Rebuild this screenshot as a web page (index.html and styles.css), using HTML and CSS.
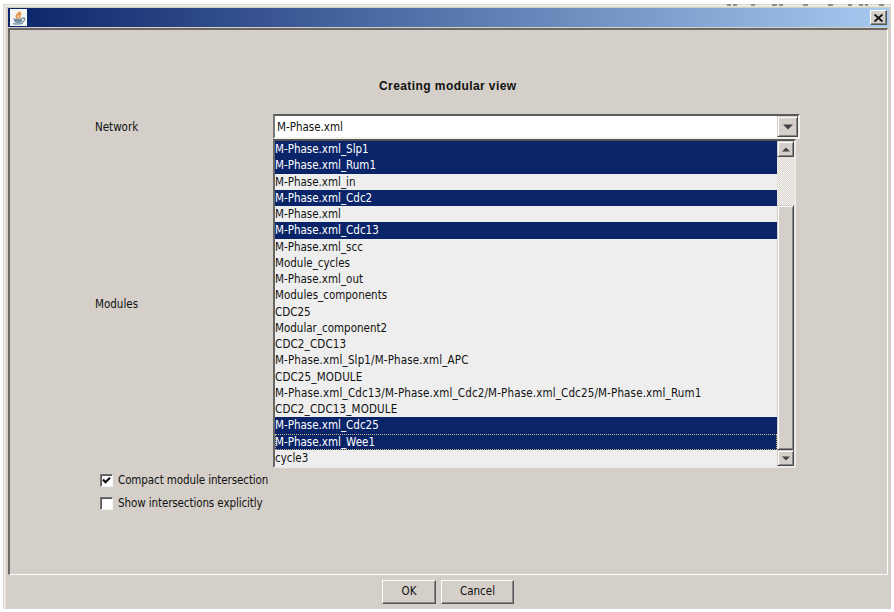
FILE: index.html
```html
<!DOCTYPE html>
<html lang="en">
<head>
<meta charset="utf-8">
<title>Creating modular view</title>
<link rel="stylesheet" href="styles.css">
</head>
<body>
<div class="window">
  <svg class="behind" width="167" height="2" viewBox="0 0 167 2"><path d="M3 1h4M9 1h4M27 1h4M48 1h5M55 1h4M79 1h5M104 1h5M124 1h4M135 1h4M141 1h3M155 1h5" stroke="#757570" stroke-width="1.500"/></svg>
  <header class="titlebar">
    <svg class="java" width="17" height="17" viewBox="0 0 17 17">
      <rect width="17" height="17" fill="#f5f7f5"/>
      <path d="M9.800 2.500C9.500 4.500 6.500 5 6.500 7.500Q6.800 9 8 10M11.300 4.500C8 6 10.500 7.500 9.300 9.500" fill="none" stroke="#e99a55" stroke-width="2"/>
      <path d="M3.500 9Q8 11 12 9V12Q11 14 8 14T4 12z" fill="#718da4"/>
      <path d="M12 9.500Q15 7.500 14.500 10.500T11.500 12.500M3 14.500Q8 15.700 13 14.300" fill="none" stroke="#8198aa" stroke-width="1.500"/>
    </svg>
    <span class="close"><svg width="9" height="8" viewBox="0 0 9 8"><path d="M.5 0.500L8.500 7.500M8.500 .5L.5 7.500" stroke="#111" stroke-width="1.900"/></svg></span>
  </header>
  <main class="panel">
    <h1>Creating modular view</h1>
    <div class="field network">
      <label>Network</label>
      <div class="combo"><span class="value">M-Phase.xml</span><span class="btn drop"><svg width="10" height="6" viewBox="0 0 10 6"><path d="M0 .5H10L5 5.500z" fill="#404040"/></svg></span></div>
    </div>
    <div class="field modules">
      <label>Modules</label>
      <div class="listbox">
        <ul>
          <li class="sel">M-Phase.xml_Slp1</li>
          <li class="sel">M-Phase.xml_Rum1</li>
          <li>M-Phase.xml_in</li>
          <li class="sel">M-Phase.xml_Cdc2</li>
          <li>M-Phase.xml</li>
          <li class="sel">M-Phase.xml_Cdc13</li>
          <li>M-Phase.xml_scc</li>
          <li>Module_cycles</li>
          <li>M-Phase.xml_out</li>
          <li>Modules_components</li>
          <li>CDC25</li>
          <li>Modular_component2</li>
          <li class="caps">CDC2_CDC13</li>
          <li class="path">M-Phase.xml_Slp1/M-Phase.xml_APC</li>
          <li class="caps">CDC25_MODULE</li>
          <li class="path">M-Phase.xml_Cdc13/M-Phase.xml_Cdc2/M-Phase.xml_Cdc25/M-Phase.xml_Rum1</li>
          <li class="caps">CDC2_CDC13_MODULE</li>
          <li class="sel">M-Phase.xml_Cdc25</li>
          <li class="sel focus">M-Phase.xml_Wee1</li>
          <li>cycle3</li>
        </ul>
        <div class="scroll">
          <span class="btn arrow"><svg width="8" height="5" viewBox="0 0 8 5"><path d="M0 4.500H8L4 .5z" fill="#404040"/></svg></span>
          <span class="track"></span>
          <span class="btn thumb"></span>
          <span class="btn arrow"><svg width="8" height="5" viewBox="0 0 8 5"><path d="M0 .5H8L4 4.500z" fill="#404040"/></svg></span>
        </div>
      </div>
    </div>
    <div class="check"><span class="box"><svg width="9" height="9" viewBox="0 0 9 9"><path d="M1 3.500L3.500 6.200L8 1.700" fill="none" stroke="#111" stroke-width="2.300"/></svg></span><span class="check-text">Compact module intersection</span></div>
    <div class="check second"><span class="box"></span><span class="check-text">Show intersections explicitly</span></div>
  </main>
  <footer>
    <div class="push ok">OK</div>
    <div class="push cancel">Cancel</div>
  </footer>
</div>
</body>
</html>
```
FILE: styles.css
```css
* { box-sizing: border-box; }
body {
  margin: 0;
  padding: 4px 3px 3px;
  width: 894px;
  height: 612px;
  overflow: hidden;
  background: #fff;
  color: #111;
  font: 11.5px/16px "DejaVu Sans Condensed", "DejaVu Sans", sans-serif;
  font-stretch: condensed;
}
.window {
  position: relative;
  height: 605px;
  background: #d4cfc8;
  border-left: 1px solid #d8d8d4;
  border-top: 1px solid #d8d8d0;
  box-shadow: inset 1px 1px #f0efe8, inset 2px 2px #e5e3dc;
  padding: 3px 2px 0 4px;
  display: flex;
  flex-direction: column;
}
.behind { position: absolute; top: -1px; right: 0; }
.titlebar {
  height: 19px;
  flex: none;
  display: flex;
  justify-content: space-between;
  padding: 1px 2px 0;
  background: linear-gradient(90deg, #0a246a, #a6caf0);
}
.java { display: block; }
.close {
  width: 17px;
  height: 15px;
  margin-top: 1px;
  display: grid;
  place-items: center;
  background: #d4cfc8;
  border: 1px solid;
  border-color: #fff #555 #555 #fff;
  box-shadow: inset -1px -1px #888;
}
.panel {
  height: 547px;
  flex: none;
  margin-top: 1px;
  border: 1px solid;
  border-color: #6b6865 #fff #fff #6b6865;
  border-top-width: 2px;
  border-left-width: 2px;
  margin-right: 1px;
}
h1 {
  margin: 48px 0 0 369px;
  font: bold 12px/16px "Liberation Sans", sans-serif;
  letter-spacing: 0.42px;
  white-space: nowrap;
}
.field { display: flex; }
label { width: 263px; padding-left: 85px; align-self: center; }
.network { margin-top: 20px; height: 25px; }
.combo {
  width: 527px;
  height: 25px;
  display: flex;
  background: #fff;
  border: 2px solid;
  border-color: #5b5b5b #f3f3ee #f3f3ee #777;
}
.value { flex: 1; padding: 3px 0 0 2px; }
.btn {
  display: grid;
  place-items: center;
  background: #d4cfc8;
  border: 1px solid #d4cfc8;
  border-right-color: #484848;
  border-bottom-color: #484848;
  box-shadow: inset 1px 1px #fff, inset -1px -1px #888;
}
.drop { width: 21px; }
.listbox {
  width: 523px;
  height: 329px;
  display: flex;
  border: 2px solid;
  border-color: #555 #eceae5 #eceae5 #666;
}
ul {
  list-style: none;
  margin: 0;
  padding: 0;
  width: 502px;
  display: grid;
  grid-template-rows: repeat(20, 1fr);
  background: #eee;
}
li { line-height: 17px; white-space: nowrap; min-height: 0; }
.path { letter-spacing: 0.15px; }
.caps { letter-spacing: 0.15px; }
.sel { background: #0a246a; color: #fff; }
.focus { outline: 1px dotted #c5b882; outline-offset: -1px; }
.scroll { width: 17px; display: flex; flex-direction: column; }
.arrow { height: 16px; flex: none; }
.track {
  height: 48px;
  background: repeating-conic-gradient(#d9d6d0 0 25%, #f4f3ef 0 50%) 0 0 / 2px 2px;
}
.thumb { flex: 1; }
.check { display: flex; align-items: center; height: 16px; margin: 4px 0 0 90px; letter-spacing: -0.1px; }
.second { margin-top: 7px; }
.box {
  width: 13px;
  height: 13px;
  display: grid;
  place-items: center;
  background: #fff;
  border: 1px solid;
  border-color: #777 #f5f5f0 #f5f5f0 #777;
  box-shadow: inset 1px 1px #555;
  margin-right: 5px;
}
footer { display: flex; gap: 5px; padding: 5px 0 0 374px; }
.push {
  height: 24px;
  text-align: center;
  line-height: 21px;
  border: 1px solid;
  border-color: #fff #555 #555 #fff;
  box-shadow: inset -1px -1px #888;
}
.ok { width: 54px; }
.cancel { width: 73px; }
```
